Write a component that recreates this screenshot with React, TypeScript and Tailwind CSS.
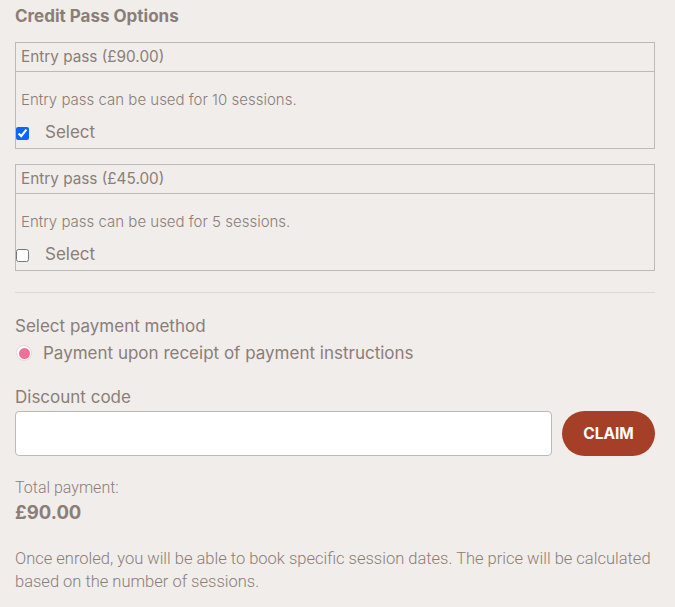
import React from "react";

function PassBox({ title, desc, checked }: { title: string; desc: string; checked: boolean }) {
  return (
    <div className="border border-[#bdb9b6]">
      <div className="h-[29px] border-b border-[#bdb9b6] px-[5px] flex items-center text-[15.3px] leading-none">
        {title}
      </div>
      <div className="pt-[18px] text-[15px] font-light leading-[20px] px-[5px]">{desc}</div>
      <div className="mt-[9px] flex items-center h-[29px] pb-[1px]">
        <input
          type="checkbox"
          defaultChecked={checked}
          className="m-0 w-[13px] h-[13px] accent-[#0a66ff]"
        />
        <span className="ml-[16px] text-[17px]">Select</span>
      </div>
    </div>
  );
}

export default function App() {
  return (
    <div
      className="min-h-[607px] bg-[#f1edea] text-[#8a7e79] pl-[15px] pr-[20px] pt-[5px]"
      style={{ fontFamily: "Inter, 'Noto Sans', sans-serif" }}
    >
      <h2 className="text-[17px] font-bold leading-[22px] mb-[15px]">Credit Pass Options</h2>
      <div className="flex flex-col gap-[15px]">
        <PassBox title="Entry pass (£90.00)" desc="Entry pass can be used for 10 sessions." checked />
        <PassBox title="Entry pass (£45.00)" desc="Entry pass can be used for 5 sessions." checked={false} />
      </div>
      <div className="mt-[21px] border-t border-[#dcd7d3]" />
      <div className="mt-[22px] text-[17px] leading-[22px]">Select payment method</div>
      <div className="mt-[5px] flex items-center">
        <span className="ml-[1px] w-[16px] h-[16px] rounded-full bg-white border border-[#e2dcd9] flex items-center justify-center">
          <span className="w-[11px] h-[11px] rounded-full bg-[#f36f9a]" />
        </span>
        <span className="ml-[11px] text-[17px] leading-[22px]">Payment upon receipt of payment instructions</span>
      </div>
      <div className="mt-[22px] text-[17px] leading-[22px]">Discount code</div>
      <div className="mt-[3px] flex items-center gap-[10px]">
        <input
          type="text"
          className="flex-1 h-[45px] bg-white border border-[#bdb9b6] rounded-[4px] outline-none px-3"
        />
        <button className="w-[93px] h-[45px] rounded-full bg-[#a63f28] text-white font-bold text-[15.5px]">
          CLAIM
        </button>
      </div>
      <div
        className="mt-[22px] text-[16px] font-light leading-[20px]"
        style={{ fontFamily: "Roboto, sans-serif" }}
      >
        Total payment:
      </div>
      <div className="mt-[2px] text-[18.5px] font-bold leading-[24px]">£90.00</div>
      <p
        className="mt-[23px] text-[16.5px] font-light leading-[23px]"
        style={{ fontFamily: "Roboto, sans-serif" }}
      >
        Once enroled, you will be able to book specific session dates. The price will be calculated based on the
        number of sessions.
      </p>
    </div>
  );
}
